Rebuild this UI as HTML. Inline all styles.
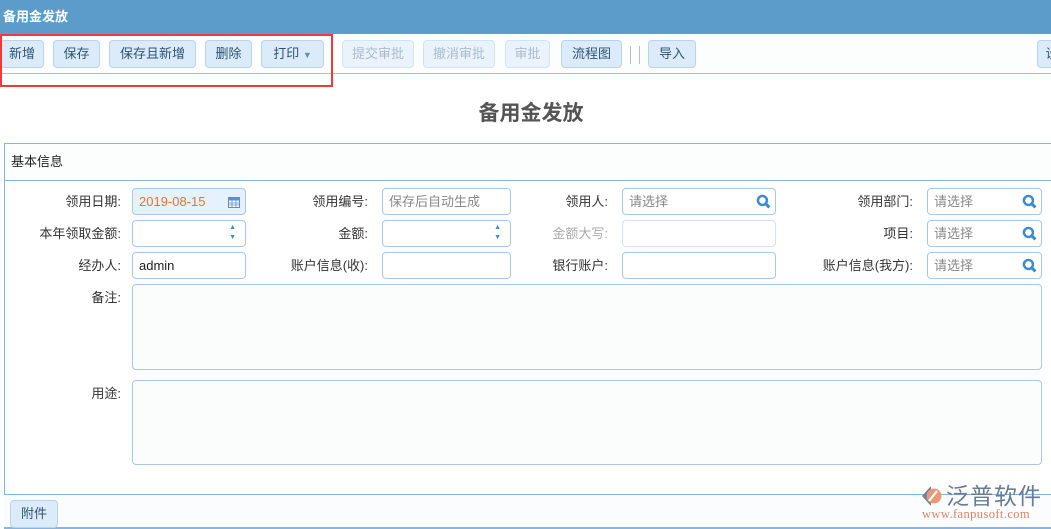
<!DOCTYPE html>
<html><head><meta charset="utf-8">
<style>
*{box-sizing:border-box;margin:0;padding:0}
body{width:1051px;height:529px;overflow:hidden;background:#fff;font-family:"Liberation Sans","Noto Sans CJK SC",sans-serif;font-size:13px;color:#333;position:relative}
.hdr{position:absolute;left:0;top:0;width:1051px;height:34px;background:#5b9ccb;color:#fff;font-weight:bold;font-size:13px;line-height:34px;padding-left:3px}
.tb{position:absolute;left:0;top:34px;width:1051px;height:40px;background:#fcfdfd;border-bottom:1px solid #9fc5dc}
.btn{position:absolute;top:6px;height:28px;border:1px solid #b9d3ea;border-radius:4px;background:#dcebfa;color:#2f5373;font-size:13px;line-height:26px;text-align:center}
.dis{color:#a9bccd;background:#eaf3fc;border-color:#d3e3f1}
.sep{position:absolute;top:12px;width:1px;height:18px;background:#bbb}
.red{position:absolute;left:0;top:34px;width:333px;height:53px;border:2px solid #f03a3a}
.title{position:absolute;left:0;width:1062px;top:97px;text-align:center;font-size:21px;font-weight:bold;color:#555}
.panel{position:absolute;left:4px;top:143px;width:1060px;height:386px;border:1px solid #86b5df;background:#fff}
.ph{height:37px;border-bottom:1px solid #86b5df;line-height:36px;padding-left:6px;background:#fcfdfd;color:#222}
.lb{position:absolute;text-align:right;color:#333;line-height:27px;width:158px}
.in{position:absolute;height:27px;border:1px solid #a9c9e6;border-radius:4px;background:#fff;line-height:25px;padding-left:6px;color:#888}
.g{color:#aaa}
.srch{position:absolute;right:4px;top:5px}
.foot{position:absolute;left:4px;top:494px;width:1060px;height:34px;border-top:1px solid #86b5df;border-bottom:1px solid #86b5df;background:#fafcfd}
</style></head><body>
<div class="hdr">备用金发放</div>
<div class="tb">
<div class="btn" style="left:0;width:44px">新增</div>
<div class="btn" style="left:53px;width:47px">保存</div>
<div class="btn" style="left:109px;width:87px">保存且新增</div>
<div class="btn" style="left:205px;width:47px">删除</div>
<div class="btn" style="left:261px;width:63px">打印 <span style="font-size:9px;color:#5a8fc4">▼</span></div>
<div class="btn dis" style="left:342px;width:72px">提交审批</div>
<div class="btn dis" style="left:423px;width:72px">撤消审批</div>
<div class="btn dis" style="left:505px;width:45px">审批</div>
<div class="btn" style="left:561px;width:61px">流程图</div>
<div class="sep" style="left:630px"></div><div class="sep" style="left:639px"></div>
<div class="btn" style="left:648px;width:48px">导入</div>
<div class="btn" style="left:1037px;width:30px">设</div>
</div>
<div class="red"></div>
<div class="title">备用金发放</div>
<div class="panel"><div class="ph">基本信息</div></div>

<div class="lb" style="left:-37px;top:188px">领用日期:</div>
<div class="in" style="left:132px;top:188px;width:114px;background:#e5f1fc;color:#e0762e">2019-08-15
<svg style="position:absolute;right:5px;top:7px" width="12" height="12" viewBox="0 0 12 12"><rect x="0.5" y="1.5" width="11" height="10" fill="#fff" stroke="#5d8fc6"/><rect x="0.5" y="1.5" width="11" height="3" fill="#5d8fc6"/><path d="M4 4v7M8 4v7M1 7h10M1 9h10" stroke="#5d8fc6" stroke-width="0.8"/></svg></div>
<div class="lb" style="left:210px;top:188px">领用编号:</div>
<div class="in" style="left:382px;top:188px;width:129px">保存后自动生成</div>
<div class="lb" style="left:450px;top:188px">领用人:</div>
<div class="in" style="left:622px;top:188px;width:154px">请选择<svg class="srch" width="15" height="15" viewBox="0 0 14 14"><circle cx="6" cy="6" r="4.2" fill="none" stroke="#3b8bd0" stroke-width="2.3"/><path d="M9 9l3.5 3.5" stroke="#3b8bd0" stroke-width="2.8"/></svg></div>
<div class="lb" style="left:755px;top:188px">领用部门:</div>
<div class="in" style="left:927px;top:188px;width:115px">请选择<svg class="srch" width="15" height="15" viewBox="0 0 14 14"><circle cx="6" cy="6" r="4.2" fill="none" stroke="#3b8bd0" stroke-width="2.3"/><path d="M9 9l3.5 3.5" stroke="#3b8bd0" stroke-width="2.8"/></svg></div>

<div class="lb" style="left:-37px;top:220px">本年领取金额:</div>
<div class="in" style="left:132px;top:220px;width:114px"><span style="position:absolute;right:9px;top:2px;font-size:7px;line-height:10px;color:#3b8bd0">▲<br>▼</span></div>
<div class="lb" style="left:210px;top:220px">金额:</div>
<div class="in" style="left:382px;top:220px;width:129px"><span style="position:absolute;right:9px;top:2px;font-size:7px;line-height:10px;color:#3b8bd0">▲<br>▼</span></div>
<div class="lb g" style="left:450px;top:220px">金额大写:</div>
<div class="in" style="left:622px;top:220px;width:154px;border-color:#d3e3f1"></div>
<div class="lb" style="left:755px;top:220px">项目:</div>
<div class="in" style="left:927px;top:220px;width:115px">请选择<svg class="srch" width="15" height="15" viewBox="0 0 14 14"><circle cx="6" cy="6" r="4.2" fill="none" stroke="#3b8bd0" stroke-width="2.3"/><path d="M9 9l3.5 3.5" stroke="#3b8bd0" stroke-width="2.8"/></svg></div>

<div class="lb" style="left:-37px;top:252px">经办人:</div>
<div class="in" style="left:132px;top:252px;width:114px;color:#222">admin</div>
<div class="lb" style="left:210px;top:252px">账户信息(收):</div>
<div class="in" style="left:382px;top:252px;width:129px"></div>
<div class="lb" style="left:450px;top:252px">银行账户:</div>
<div class="in" style="left:622px;top:252px;width:154px"></div>
<div class="lb" style="left:755px;top:252px">账户信息(我方):</div>
<div class="in" style="left:927px;top:252px;width:115px">请选择<svg class="srch" width="15" height="15" viewBox="0 0 14 14"><circle cx="6" cy="6" r="4.2" fill="none" stroke="#3b8bd0" stroke-width="2.3"/><path d="M9 9l3.5 3.5" stroke="#3b8bd0" stroke-width="2.8"/></svg></div>

<div class="lb" style="left:-37px;top:284px">备注:</div>
<div class="in" style="left:132px;top:284px;width:910px;height:86px;background:#fbfcfc"></div>
<div class="lb" style="left:-37px;top:380px">用途:</div>
<div class="in" style="left:132px;top:380px;width:910px;height:85px;background:#fbfcfc"></div>

<div class="foot"><div class="btn" style="left:6px;top:5px;width:48px;height:28px">附件</div></div>

<div style="position:absolute;left:920px;top:482px;width:131px;height:44px">
<svg style="position:absolute;left:0;top:3px" width="24" height="22" viewBox="0 0 24 22"><path d="M11 1L2 11l9 10z" fill="#6f7f9a"/><circle cx="14" cy="11" r="7.5" fill="#e89a73"/><path d="M9 16l8-10" stroke="#fff" stroke-width="2.2"/></svg>
<div style="position:absolute;left:26px;top:-3px;font-size:23px;line-height:30px;color:#6b7a95;letter-spacing:1px;font-family:'Noto Sans CJK SC',sans-serif">泛普软件</div>
<div style="position:absolute;left:2px;top:25px;font-size:12.5px;color:#d58566;letter-spacing:0.4px;font-family:'Liberation Serif',serif">www.fanpusoft.com</div>
</div>
</body></html>
